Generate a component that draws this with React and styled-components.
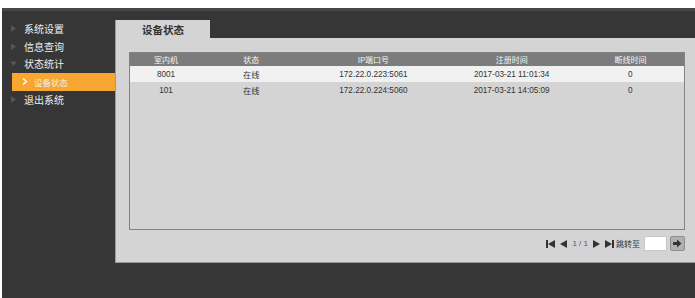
import styled, { createGlobalStyle } from "styled-components";

const GlobalStyle = createGlobalStyle`
  html, body {
    margin: 0;
    padding: 0;
    background: #ffffff;
  }
  body {
    font-family: "Liberation Sans", "Noto Sans CJK SC", sans-serif;
  }
`;

const Shell = styled.div`
  margin: 8px 0 0 2px;
  height: 290px;
  background: #363636;
  display: flex;
  flex-direction: column;
`;

const TopStrip = styled.div`
  height: 3px;
  background: #474747;
`;

const Main = styled.div`
  flex: 1;
  display: flex;
`;

const Sidebar = styled.ul`
  width: 113px;
  margin: 0;
  padding: 9px 0 0;
  list-style: none;
`;

const MenuItem = styled.li`
  height: ${(p) => (p.$active ? "18px" : "17.5px")};
  display: flex;
  align-items: center;
  padding-left: ${(p) => (p.$sub ? "10px" : "8px")};
  margin-left: ${(p) => (p.$sub ? "10px" : "0")};
  background: ${(p) => (p.$active ? "#f8a632" : "transparent")};
  color: #eeeeee;
  font-size: ${(p) => (p.$sub ? "8.5px" : "10px")};
  font-family: "Noto Sans CJK SC", sans-serif;
`;

const Marker = styled.span`
  width: ${(p) => (p.$sub ? "12px" : "14px")};
  display: flex;
  align-items: center;
`;

const Content = styled.div`
  flex: 1;
  display: flex;
  flex-direction: column;
  padding-top: 9px;
`;

const TabRow = styled.div`
  height: 18px;
  display: flex;
`;

const Tab = styled.div`
  width: 94px;
  background: #d4d4d4;
  border-left: 1px solid #9a9a9a;
  display: flex;
  align-items: center;
  justify-content: center;
  font-family: "Noto Sans CJK SC", sans-serif;
  font-size: 10.5px;
  font-weight: bold;
  color: #333333;
`;

const Panel = styled.div`
  height: 225px;
  background: #d4d4d4;
  border-left: 1px solid #9a9a9a;
  border-bottom: 1px solid #9a9a9a;
  box-sizing: border-box;
  padding: 14px 10px 0 13px;
  display: flex;
  flex-direction: column;
`;

const TableBox = styled.div`
  height: 178px;
  border: 1px solid #828282;
  box-sizing: border-box;
  background: #d4d4d4;
`;

const Table = styled.table`
  width: 100%;
  border-collapse: collapse;
  table-layout: fixed;
  font-size: 8px;
`;

const HeadCell = styled.th`
  height: 13px;
  padding: 0;
  background: #7c7c7c;
  color: #f4f4f4;
  font-weight: normal;
  font-family: "Noto Sans CJK SC", sans-serif;
  font-size: 8px;
  width: ${(p) => p.$w}px;
`;

const Row = styled.tr`
  background: ${(p) => (p.$light ? "#f1f1f1" : "#d4d4d4")};
`;

const Cell = styled.td`
  height: 16px;
  padding: 0;
  text-align: center;
  color: #333333;
  font-family: "Liberation Sans", "Noto Sans CJK SC", sans-serif;
  font-size: 8.2px;
`;

const Pager = styled.div`
  margin-top: 6px;
  display: flex;
  justify-content: flex-end;
  align-items: center;
  gap: 5px;
  font-size: 8px;
  color: #444444;
`;

const PageText = styled.span`
  font-family: "Liberation Sans", sans-serif;
  font-size: 8px;
  color: #555555;
`;

const JumpLabel = styled.span`
  font-family: "Noto Sans CJK SC", sans-serif;
  font-size: 8px;
  color: #333333;
  margin-left: -3px;
`;

const JumpInput = styled.div`
  width: 21px;
  height: 13px;
  background: #ffffff;
  border: 1px solid #c8c8c8;
  margin-left: -1px;
`;

const GoButton = styled.div`
  width: 13px;
  height: 13px;
  background: #b0b0b0;
  border: 1px solid #8e8e8e;
  border-radius: 2px;
  display: flex;
  align-items: center;
  justify-content: center;
  margin-left: -2px;
`;

const Tri = ({ down, color = "#555" }) => (
  <svg width="7" height="7" viewBox="0 0 7 7">
    {down ? (
      <polygon points="0,1.5 7,1.5 3.5,6" fill={color} />
    ) : (
      <polygon points="1,0 6,3.5 1,7" fill={color} />
    )}
  </svg>
);

const Chevron = () => (
  <svg width="6" height="7" viewBox="0 0 6 7">
    <polyline points="1,0.5 4.5,3.5 1,6.5" fill="none" stroke="#fff" strokeWidth="1.4" />
  </svg>
);

const FirstIcon = () => (
  <svg width="9" height="8" viewBox="0 0 9 8">
    <rect x="0" y="0" width="2" height="8" fill="#333" />
    <polygon points="9,0 2,4 9,8" fill="#333" />
  </svg>
);

const PrevIcon = () => (
  <svg width="7" height="8" viewBox="0 0 7 8">
    <polygon points="7,0 0,4 7,8" fill="#333" />
  </svg>
);

const NextIcon = () => (
  <svg width="7" height="8" viewBox="0 0 7 8">
    <polygon points="0,0 7,4 0,8" fill="#333" />
  </svg>
);

const LastIcon = () => (
  <svg width="9" height="8" viewBox="0 0 9 8">
    <polygon points="0,0 7,4 0,8" fill="#333" />
    <rect x="7" y="0" width="2" height="8" fill="#333" />
  </svg>
);

const GoIcon = () => (
  <svg width="9" height="9" viewBox="0 0 9 9">
    <polygon points="0,3 4,3 4,0.5 8.5,4.5 4,8.5 4,6 0,6" fill="#333" />
  </svg>
);

const columns = [
  { title: "室内机", w: 72 },
  { title: "状态", w: 98 },
  { title: "IP端口号", w: 146 },
  { title: "注册时间", w: 130 },
  { title: "断线时间", w: 107 },
];

const devices = [
  { id: "8001", state: "在线", ip: "172.22.0.223:5061", reg: "2017-03-21 11:01:34", off: "0" },
  { id: "101", state: "在线", ip: "172.22.0.224:5060", reg: "2017-03-21 14:05:09", off: "0" },
];

export default function App() {
  return (
    <>
      <GlobalStyle />
      <Shell>
        <TopStrip />
        <Main>
          <Sidebar>
            <MenuItem>
              <Marker><Tri /></Marker>系统设置
            </MenuItem>
            <MenuItem>
              <Marker><Tri /></Marker>信息查询
            </MenuItem>
            <MenuItem>
              <Marker><Tri down /></Marker>状态统计
            </MenuItem>
            <MenuItem $sub $active>
              <Marker $sub><Chevron /></Marker>设备状态
            </MenuItem>
            <MenuItem>
              <Marker><Tri /></Marker>退出系统
            </MenuItem>
          </Sidebar>

          <Content>
            <TabRow>
              <Tab>设备状态</Tab>
            </TabRow>
            <Panel>
              <TableBox>
                <Table>
                  <thead>
                    <tr>
                      {columns.map((c) => (
                        <HeadCell key={c.title} $w={c.w}>{c.title}</HeadCell>
                      ))}
                    </tr>
                  </thead>
                  <tbody>
                    {devices.map((d, i) => (
                      <Row key={d.id} $light={i === 0}>
                        <Cell>{d.id}</Cell>
                        <Cell>{d.state}</Cell>
                        <Cell>{d.ip}</Cell>
                        <Cell>{d.reg}</Cell>
                        <Cell>{d.off}</Cell>
                      </Row>
                    ))}
                  </tbody>
                </Table>
              </TableBox>

              <Pager>
                <FirstIcon />
                <PrevIcon />
                <PageText>1 / 1</PageText>
                <NextIcon />
                <LastIcon />
                <JumpLabel>跳转至</JumpLabel>
                <JumpInput />
                <GoButton><GoIcon /></GoButton>
              </Pager>
            </Panel>
          </Content>
        </Main>
      </Shell>
    </>
  );
}
